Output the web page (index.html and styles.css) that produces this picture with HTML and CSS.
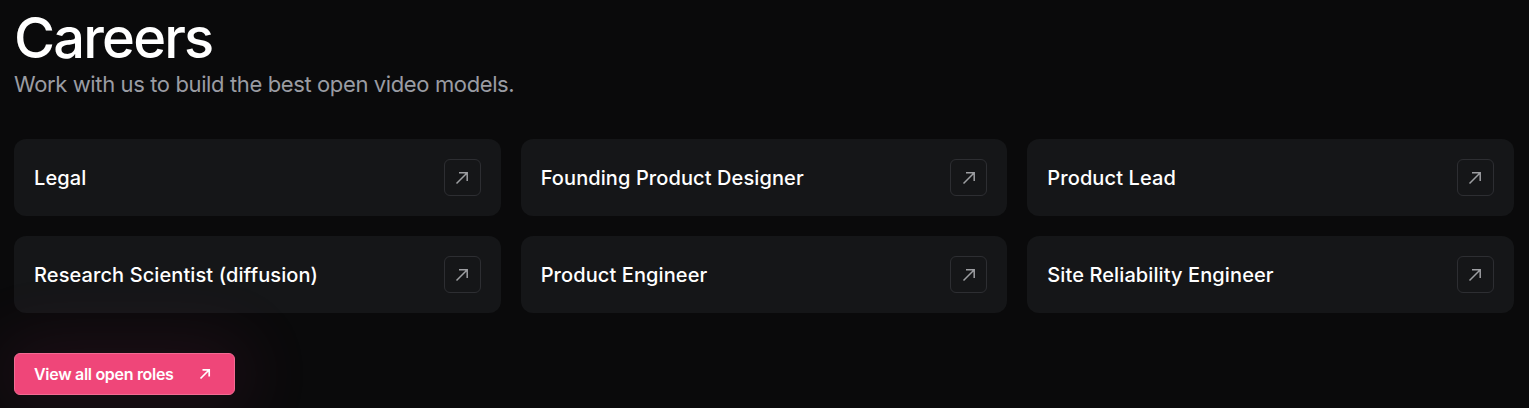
FILE: index.html
```html
<!DOCTYPE html>
<html lang="en">
<head>
<meta charset="utf-8">
<title>Careers</title>
<link rel="stylesheet" href="styles.css">
</head>
<body>
<main class="careers">
  <header class="head">
    <h1 class="title">Careers</h1>
    <p class="subtitle">Work with us to build the best open video models.</p>
  </header>
  <div class="grid">
    <a class="card" href="#"><span class="card-name">Legal</span><span class="icon-box"><svg viewBox="0 0 16 16" width="16" height="16"><path d="M2.5 13.5 13 3M5 2.8h8.2V11" fill="none" stroke="currentColor" stroke-width="1.5"/></svg></span></a>
    <a class="card" href="#"><span class="card-name">Founding Product Designer</span><span class="icon-box"><svg viewBox="0 0 16 16" width="16" height="16"><path d="M2.5 13.5 13 3M5 2.8h8.2V11" fill="none" stroke="currentColor" stroke-width="1.5"/></svg></span></a>
    <a class="card" href="#"><span class="card-name">Product Lead</span><span class="icon-box"><svg viewBox="0 0 16 16" width="16" height="16"><path d="M2.5 13.5 13 3M5 2.8h8.2V11" fill="none" stroke="currentColor" stroke-width="1.5"/></svg></span></a>
    <a class="card" href="#"><span class="card-name">Research Scientist (diffusion)</span><span class="icon-box"><svg viewBox="0 0 16 16" width="16" height="16"><path d="M2.5 13.5 13 3M5 2.8h8.2V11" fill="none" stroke="currentColor" stroke-width="1.5"/></svg></span></a>
    <a class="card" href="#"><span class="card-name">Product Engineer</span><span class="icon-box"><svg viewBox="0 0 16 16" width="16" height="16"><path d="M2.5 13.5 13 3M5 2.8h8.2V11" fill="none" stroke="currentColor" stroke-width="1.5"/></svg></span></a>
    <a class="card" href="#"><span class="card-name">Site Reliability Engineer</span><span class="icon-box"><svg viewBox="0 0 16 16" width="16" height="16"><path d="M2.5 13.5 13 3M5 2.8h8.2V11" fill="none" stroke="currentColor" stroke-width="1.5"/></svg></span></a>
  </div>
  <a class="cta" href="#"><span>View all open roles</span><svg viewBox="0 0 12 12" width="12" height="12"><path d="M1.5 10.5 10 2M3.5 1.8h6.7V8.5" fill="none" stroke="currentColor" stroke-width="1.7"/></svg></a>
</main>
</body>
</html>
```
FILE: styles.css
```css
* { box-sizing: border-box; }
html, body { margin: 0; padding: 0; }
body {
  background: #0a0a0b;
  color: #fff;
  font-family: Inter, "Liberation Sans", sans-serif;
  height: 408px;
  overflow: hidden;
}
.careers {
  padding: 6px 15px 0 14px;
}
.title {
  margin: 0;
  font-size: 56px;
  font-weight: 500;
  line-height: 64px;
  letter-spacing: -1.8px;
}
.subtitle {
  margin: 0;
  font-size: 22px;
  line-height: 29px;
  color: #9a9ca3;
  letter-spacing: -0.38px;
}
.grid {
  margin-top: 40px;
  display: grid;
  grid-template-columns: repeat(3, 1fr);
  gap: 20px;
}
.card {
  display: flex;
  align-items: center;
  justify-content: space-between;
  height: 77px;
  padding: 0 20px;
  background: #151618;
  border-radius: 12px;
  text-decoration: none;
  color: #fff;
}
.card-name {
  font-size: 20px;
  font-weight: 500;
  letter-spacing: 0.1px;
}
.icon-box {
  width: 37px;
  height: 37px;
  border: 1px solid #2d2e32;
  border-radius: 6px;
  display: flex;
  align-items: center;
  justify-content: center;
  color: #9d9ea2;
}
.cta {
  margin-top: 40px;
  display: inline-flex;
  align-items: center;
  gap: 25px;
  height: 42px;
  padding: 0 23px 0 19px;
  background: #ef4679;
  border: 1px solid #f36b93;
  border-radius: 6px;
  color: #fff;
  text-decoration: none;
  font-size: 16px;
  font-weight: 600;
  letter-spacing: -0.3px;
  box-shadow: 0 0 70px 14px rgba(200, 60, 130, 0.11);
}
```
